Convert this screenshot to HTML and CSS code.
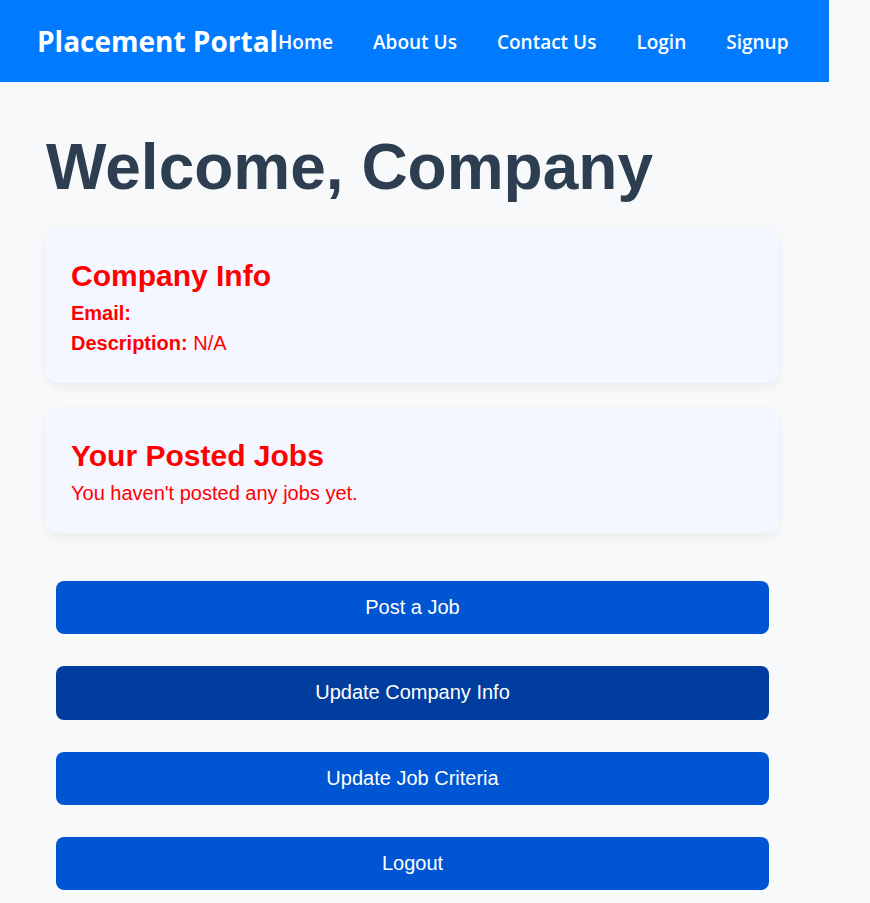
FILE: index.html
```html
<!DOCTYPE html>
<html lang="en">
<head>
<meta charset="utf-8">
<title>Company Dashboard</title>
<link rel="stylesheet" href="styles.css">
</head>
<body>
<nav class="navbar">
  <div class="brand">Placement Portal</div>
  <ul class="nav-links">
    <li><a href="#">Home</a></li>
    <li><a href="#">About Us</a></li>
    <li><a href="#">Contact Us</a></li>
    <li><a href="#">Login</a></li>
    <li><a href="#">Signup</a></li>
  </ul>
</nav>
<main class="dashboard">
  <h1 class="welcome">Welcome, Company</h1>
  <section class="card">
    <h2 class="card-title">Company Info</h2>
    <p class="card-line"><strong>Email:</strong> </p>
    <p class="card-line"><strong>Description:</strong> N/A</p>
  </section>
  <section class="card">
    <h2 class="card-title">Your Posted Jobs</h2>
    <p class="card-line">You haven't posted any jobs yet.</p>
  </section>
  <div class="actions">
    <button class="btn">Post a Job</button>
    <button class="btn btn-active">Update Company Info</button>
    <button class="btn">Update Job Criteria</button>
    <button class="btn">Logout</button>
  </div>
</main>
</body>
</html>
```
FILE: styles.css
```css
html, body {
  margin: 0;
  padding: 0;
  background: #f8f9fa;
  font-family: "Liberation Sans", Arial, sans-serif;
}

.navbar {
  display: flex;
  align-items: center;
  width: 829px;
  box-sizing: border-box;
  height: 82px;
  padding: 0 40px 0 37px;
  background: #007bff;
  font-family: "Segoe UI", "Open Sans", sans-serif;
  color: #fff;
}

.brand {
  font-size: 28px;
  font-weight: 700;
  white-space: nowrap;
}

.nav-links {
  display: flex;
  gap: 40px;
  list-style: none;
  margin: 0;
  padding: 0;
}

.nav-links a {
  color: #fff;
  text-decoration: none;
  font-size: 19px;
  font-weight: 600;
  line-height: 28px;
  display: block;
  padding-top: 2px;
}

.dashboard {
  width: 733px;
  margin: 48px 0 0 46px;
}

.welcome {
  margin: 0 0 24px;
  font-size: 64px;
  font-weight: 700;
  color: #2c3e50;
}

.card {
  background: #f4f7ff;
  border-radius: 12px;
  box-shadow: 0 4px 12px rgba(0, 0, 0, 0.06);
  padding: 31px 25px 25px;
  margin-bottom: 25px;
  color: #ff0000;
}

.card-title {
  margin: 0 0 5px;
  font-size: 30px;
  font-weight: 700;
}

.card-line {
  margin: 0;
  font-size: 20px;
  line-height: 30px;
}

.actions {
  display: flex;
  flex-direction: column;
  gap: 32px;
  padding: 23px 10px 0;
}

.btn {
  display: block;
  width: 100%;
  padding: 15px;
  border: none;
  border-radius: 8px;
  background: #0056d2;
  color: #fff;
  font-family: "Liberation Sans", Arial, sans-serif;
  font-size: 20px;
  line-height: 23.33px;
  cursor: pointer;
}

.btn-active {
  background: #003d9e;
}
```
